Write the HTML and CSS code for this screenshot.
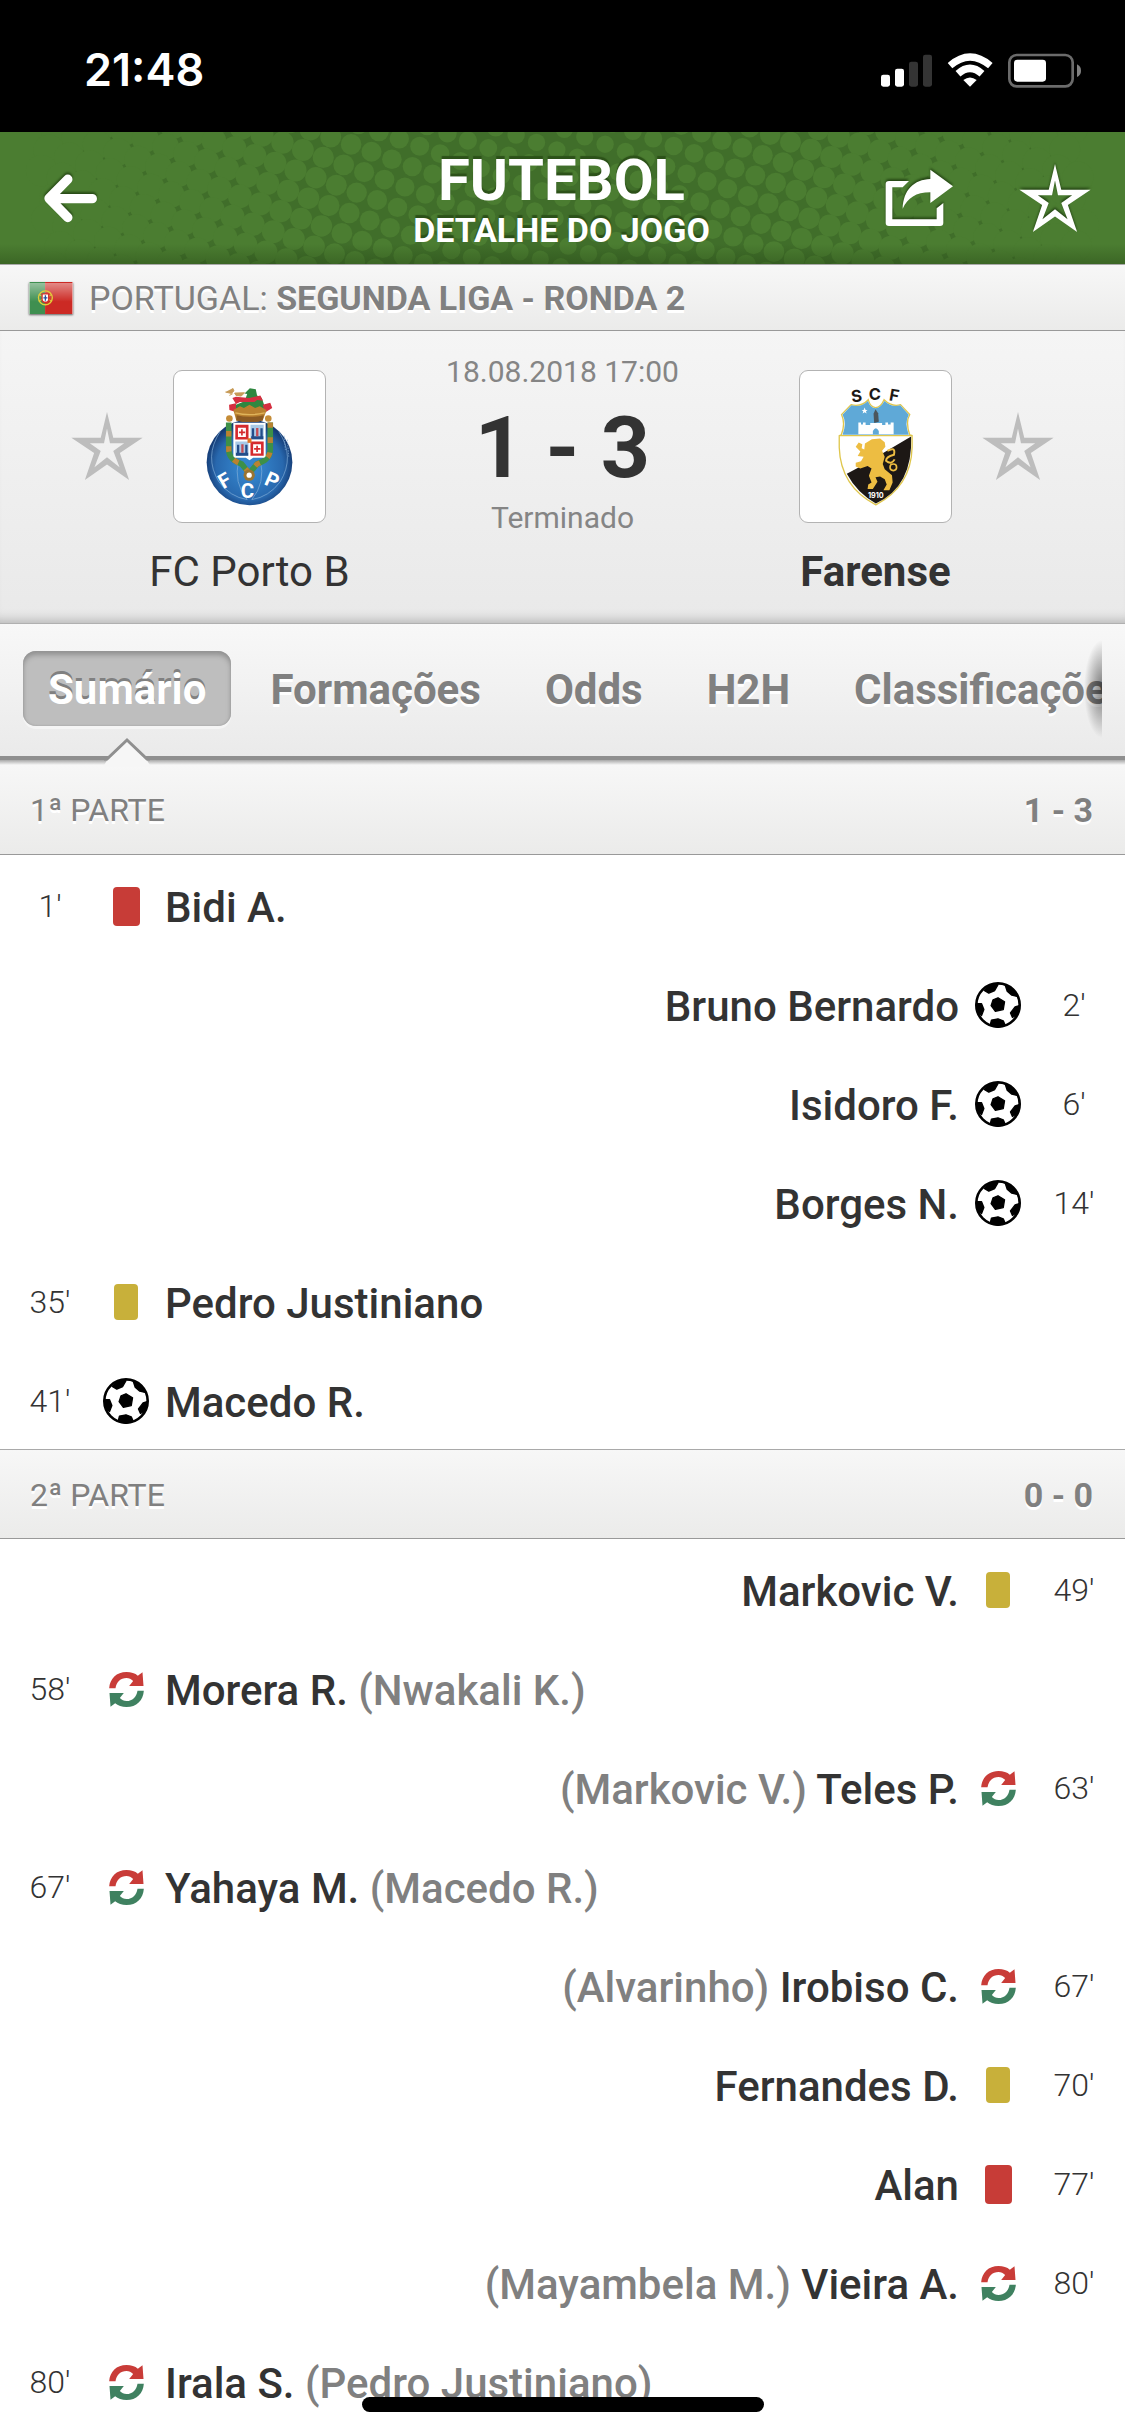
FILE: index.html
```html
<!DOCTYPE html>
<html lang="pt">
<head>
<meta charset="utf-8">
<meta name="viewport" content="width=device-width, initial-scale=1">
<title>Futebol - Detalhe do jogo</title>
<link rel="stylesheet" href="styles.css">
</head>
<body>
<svg class="defs" width="0" height="0" aria-hidden="true">
  <defs>
    <symbol id="star" viewBox="0 0 216 206">
      <path fill-rule="evenodd" d="M108 0 127 78H216L147 124 175 206 108 159 41 206 69 124 0 78H89ZM108 50 99 95H56L89 118 70 167 108 137 146 167 127 118 160 95H117Z"/>
    </symbol>
    <symbol id="ball" viewBox="0 0 140 140">
      <circle cx="70" cy="70" r="66" fill="#fff" stroke="#000" stroke-width="8"/>
      <path stroke="#000" stroke-width="4" stroke-linejoin="round" d="M70 48 90 60 86 84 62 89 49 72 55 54ZM28 26 48 8 70 8 60 26 42 34ZM92 10 116 22 128 44 112 40 98 28ZM4 66 20 66 27 84 20 102 8 92ZM134 72 122 76 108 94 114 108 130 98ZM50 116 70 112 86 118 92 132 70 138 46 132Z"/>
    </symbol>
    <symbol id="swap" viewBox="0 0 104 105">
      <path fill="#c93c38" d="M0 49C2 20 22 0 52 0 66 0 78 4 86 11L100 1 103 42H60L72 27C66 21 60 18 52 18 34 18 22 30 19 49Z"/>
      <path fill="#3f8160" d="M104 56C102 85 82 105 52 105 38 105 26 101 18 94L4 104 1 63H44L32 78C38 84 44 87 52 87 70 87 82 75 85 56Z"/>
    </symbol>
  </defs>
</svg>

<div class="status-bar">
  <time class="clock">21:48</time>
  <svg class="status-icons" viewBox="240 88 609 111" aria-hidden="true">
    <g fill="#fff"><rect x="243" y="159" width="27" height="36" rx="7"/><rect x="285" y="141" width="27" height="54" rx="7"/></g>
    <g fill="#343434"><rect x="327" y="120" width="27" height="75" rx="7"/><rect x="369" y="99" width="27" height="96" rx="7"/></g>
    <path d="M510 195 490 175Q510 160 530 175Z" fill="#fff"/>
    <path d="M474 156Q510 124 546 156" fill="none" stroke="#fff" stroke-width="22"/>
    <path d="M450 132Q510 80 571 132" fill="none" stroke="#fff" stroke-width="21"/>
    <rect x="628" y="100" width="190" height="94" rx="22" fill="none" stroke="#6b6b6b" stroke-width="8"/>
    <rect x="642" y="114" width="96" height="66" rx="10" fill="#fff"/>
    <path d="M831 128Q843 134 843 147T831 166Z" fill="#808080"/>
  </svg>
</div>

<header class="app-header">
  <svg class="halftone" aria-hidden="true"></svg>
  <button class="icon-button back" type="button" aria-label="Voltar">
    <svg width="57" height="54" viewBox="125 155 170 160"><path d="M202 179 146 236 202 293M150 237H275" fill="none" stroke="#fff" stroke-width="28" stroke-linecap="round" stroke-linejoin="round"/></svg>
  </button>
  <div class="titles">
    <h1>FUTEBOL</h1>
    <p>DETALHE DO JOGO</p>
  </div>
  <div class="actions">
    <button class="icon-button" type="button" aria-label="Partilhar">
      <svg width="70" height="60" viewBox="250 445 210 180" fill="#fff"><path d="M325 484 306 503H275V599H408V566L428 550V609Q428 619 418 619H265Q255 619 255 609V493Q255 484 265 484Z"/><path d="M389 450 457 500 389 550V518C345 518 322 535 306 567 308 510 340 480 389 478Z"/></svg>
    </button>
    <button class="icon-button" type="button" aria-label="Favorito">
      <svg width="72" height="68" fill="#fff"><use href="#star"/></svg>
    </button>
  </div>
</header>

<div class="league">
  <svg class="flag" viewBox="0 0 130 97" aria-hidden="true">
    <defs><linearGradient id="gloss" x2="0" y2="1"><stop stop-color="#fff" stop-opacity=".45"/><stop offset="1" stop-color="#fff" stop-opacity="0"/></linearGradient></defs>
    <path fill="#3f8f50" d="M0 0H47V97H0Z"/><path fill="#cc2a24" d="M47 0H130V97H47Z"/>
    <path fill="url(#gloss)" d="M0 3H130V60H0Z"/>
    <circle cx="48" cy="48" r="21" fill="none" stroke="#e0cf3a" stroke-width="4"/>
    <path d="M28 38 68 58M28 58 68 38" stroke="#e0cf3a" stroke-width="3"/>
    <path d="M36 34H60V52Q60 64 48 64T36 52Z" fill="#d3302b"/><path d="M40 38H56V52Q56 59 48 59T40 52Z" fill="#fff"/>
    <path d="M48 40V57M42 48H54" stroke="#27519b" stroke-width="4"/>
  </svg>
  <h2>PORTUGAL: <b>SEGUNDA LIGA - RONDA 2</b></h2>
</div>

<main>
<section class="match">
  <button class="icon-button fav-home" type="button" aria-label="Seguir FC Porto B"><svg width="72" height="68"><use href="#star"/></svg></button>
  <div class="crest">
    <svg viewBox="40 30 458 458" aria-hidden="true">
      <defs><radialGradient id="blue" cx=".5" cy=".55" r=".52"><stop offset=".2" stop-color="#3484cb"/><stop offset=".75" stop-color="#2868ae"/><stop offset="1" stop-color="#143a73"/></radialGradient></defs>
      <circle cx="269" cy="307" r="130" fill="url(#blue)"/>
      <g fill="none" stroke="#85b1da" stroke-width="2"><path d="M180 214Q130 290 176 366 210 412 262 420M358 214Q408 290 362 366 328 412 276 420M236 300Q220 370 262 420M302 300Q318 370 276 420"/><path d="M384 238 388 290M374 226 378 270" stroke-dasharray="5 3"/></g>
      <path d="M206 186V270Q208 300 245 312L268 340 292 312Q330 300 332 270V186" fill="none" stroke="#3d9048" stroke-width="17"/>
      <path d="M206 186V270Q208 300 245 312L268 340 292 312Q330 300 332 270V186" fill="none" stroke="#b98231" stroke-width="16" stroke-dasharray="17 29" stroke-dashoffset="20"/>
      <circle cx="268" cy="346" r="17" fill="#9b7431"/><circle cx="268" cy="346" r="8" fill="#fff"/>
      <g fill="#c58c37"><circle cx="208" cy="174" r="10"/><circle cx="326" cy="174" r="10"/></g>
      <path d="M220 187H318V286Q318 293 308 293H280L269 301 258 293H230Q220 293 220 286Z" fill="#fff"/>
      <g fill="#d52a2e"><path d="M226 193H266V238H226ZM272 244H312V287H272Z"/></g>
      <g fill="#a9c9e6"><path d="M272 193H312V238H272ZM226 244H266V287H226Z"/></g>
      <g fill="#fff"><path d="M234 202H258V230H234ZM280 252H304V280H280Z"/></g>
      <path d="M246 207V226M237 216H256M292 257V276M283 266H302" stroke="#d52a2e" stroke-width="5"/>
      <path d="M274 228H311V237H274ZM228 278H265V287H228ZM276 204H283V228H276ZM302 204H309V228H302ZM231 254H238V278H231ZM256 254H263V278H256Z" fill="#234d8a"/>
      <path d="M289 203H296V228H289ZM244 252H251V278H244Z" fill="#c24b54"/>
      <path d="M263 234H275V248H263Z" fill="#e27424"/>
      <path d="M220 145 228 132 254 122 262 100 254 98 270 82 288 85 292 104 306 112 318 145Z" fill="#2f8740"/>
      <path d="M217 112 228 108 268 112 302 104 310 120 292 118 284 124H240L228 130ZM207 132 228 128V154L208 148ZM309 132 332 126 338 142 316 156Z" fill="#d52f40"/>
      <path d="M196 94 214 98 222 90 218 82M224 97 254 96 244 106 228 104ZM208 104 218 99" fill="#c79b57" stroke="#c79b57" stroke-width="3"/>
      <path d="M220 148 240 137 252 142 269 132 286 142 300 137 321 148 309 180Q269 190 229 180Z" fill="#b9802f"/>
      <path d="M230 164Q269 174 312 164L309 180Q269 190 229 180Z" fill="#8b5a23"/>
      <path d="M226 157Q269 168 315 157" fill="none" stroke="#e0b45b" stroke-width="4"/>
      <g fill="#fff" font-family="Roboto, sans-serif" font-weight="700" font-size="62" text-anchor="middle"><text transform="translate(204 381) rotate(-30)">F</text><text x="263" y="415">C</text><text transform="translate(329 381) rotate(24)">P</text></g>
    </svg>
  </div>
  <div class="result">
    <time>18.08.2018 17:00</time>
    <strong>1 - 3</strong>
    <span>Terminado</span>
  </div>
  <div class="crest">
    <svg viewBox="27 30 458 458" aria-hidden="true">
      <path d="M182 132Q212 140 234 117 240 140 256 141 272 140 282 117 306 140 332 132L360 162Q346 185 360 224L367 226V262Q364 380 257 436 150 380 146 262V226L152 224Q166 190 153 162Z" fill="#fff" stroke="#dfc64c" stroke-width="4"/>
      <path d="M183 134Q212 142 233 121 240 142 256 143 272 142 283 121 306 142 331 134L357 163Q343 188 357 223H156Q170 188 156 163Z" fill="#5fa9d7"/>
      <path d="M364 229Q370 380 257 432 200 400 169 342L206 322Z" fill="#1d1815"/>
      <path d="M148 226H366" stroke="#dfc64c" stroke-width="4"/>
      <path d="M204 222V186H212V192H218V186H226V194H240V188H276V194H286V186H294V192H302V186H311V222H266V212Q257 196 248 212V222Z" fill="#fff"/>
      <path d="M223 141 226 148H232L227 152 229 159 223 155 217 159 219 152 214 148H220Z" fill="#fff"/>
      <path d="M256 146 264 158 266 184 252 188 250 160Z" fill="#4b565c"/>
      <path d="M196 260 205 247 216 252 214 264 222 268 224 250 245 237 270 235 284 246 286 260 276 272 284 290 278 312 284 328 306 346 308 368 298 392 280 392 290 374 284 358 270 350 256 352 262 366 248 388 232 388 234 374 244 368 236 348 244 326 232 318 210 326 196 320 196 308 212 304 220 290 202 288 210 274Z" fill="#edbd42"/>
      <path d="M292 272Q318 258 312 284 288 290 288 302 304 316 314 298" fill="none" stroke="#edbd42" stroke-width="6"/>
      <circle cx="310" cy="322" r="10" fill="none" stroke="#edbd42" stroke-width="5"/>
      <g font-family="Inter, sans-serif" font-weight="700" text-anchor="middle"><g font-size="50" fill="#1d1815"><text transform="translate(201 123) rotate(-8)">S</text><text x="254" y="117">C</text><text transform="translate(310 121) rotate(10)">F</text></g><text x="257" y="416" font-size="22" fill="#fff">1910</text></g>
    </svg>
  </div>
  <button class="icon-button fav-away" type="button" aria-label="Seguir Farense"><svg width="72" height="68"><use href="#star"/></svg></button>
  <p class="team home">FC Porto B</p>
  <p class="team away winner">Farense</p>
</section>

<nav class="tabs">
  <div class="tab-list">
    <button class="tab active" type="button">Sumário
      <svg class="pointer" width="48" height="30" viewBox="0 0 48 30" aria-hidden="true"><path d="M0 30 6 20 24 1 42 20 48 30Z" fill="#f6f6f6"/><path d="M1 22H4L24 3 44 22H47" fill="none" stroke="#8f8f8f" stroke-width="3"/></svg>
    </button>
    <button class="tab" type="button">Formações</button>
    <button class="tab" type="button">Odds</button>
    <button class="tab" type="button">H2H</button>
    <button class="tab" type="button">Classificações</button>
    <span class="more-shade"></span>
  </div>
</nav>

<section>
  <header class="period first"><h3>1ª PARTE</h3><b>1 - 3</b></header>
  <ul class="events">
    <li><time>1'</time><i class="icon"><span class="card red"></span></i><p>Bidi A.</p></li>
    <li class="away"><time>2'</time><i class="icon"><svg width="46" height="46"><use href="#ball"/></svg></i><p>Bruno Bernardo</p></li>
    <li class="away"><time>6'</time><i class="icon"><svg width="46" height="46"><use href="#ball"/></svg></i><p>Isidoro F.</p></li>
    <li class="away"><time>14'</time><i class="icon"><svg width="46" height="46"><use href="#ball"/></svg></i><p>Borges N.</p></li>
    <li><time>35'</time><i class="icon"><span class="card yellow"></span></i><p>Pedro Justiniano</p></li>
    <li><time>41'</time><i class="icon"><svg width="46" height="46"><use href="#ball"/></svg></i><p>Macedo R.</p></li>
  </ul>
</section>

<section>
  <header class="period"><h3>2ª PARTE</h3><b>0 - 0</b></header>
  <ul class="events">
    <li class="away"><time>49'</time><i class="icon"><span class="card yellow"></span></i><p>Markovic V.</p></li>
    <li><time>58'</time><i class="icon"><svg width="35" height="35"><use href="#swap"/></svg></i><p>Morera R. <small>(Nwakali K.)</small></p></li>
    <li class="away"><time>63'</time><i class="icon"><svg width="35" height="35"><use href="#swap"/></svg></i><p><small>(Markovic V.)</small> Teles P.</p></li>
    <li><time>67'</time><i class="icon"><svg width="35" height="35"><use href="#swap"/></svg></i><p>Yahaya M. <small>(Macedo R.)</small></p></li>
    <li class="away"><time>67'</time><i class="icon"><svg width="35" height="35"><use href="#swap"/></svg></i><p><small>(Alvarinho)</small> Irobiso C.</p></li>
    <li class="away"><time>70'</time><i class="icon"><span class="card yellow"></span></i><p>Fernandes D.</p></li>
    <li class="away"><time>77'</time><i class="icon"><span class="card red"></span></i><p>Alan</p></li>
    <li class="away"><time>80'</time><i class="icon"><svg width="35" height="35"><use href="#swap"/></svg></i><p><small>(Mayambela M.)</small> Vieira A.</p></li>
    <li><time>80'</time><i class="icon"><svg width="35" height="35"><use href="#swap"/></svg></i><p>Irala S. <small>(Pedro Justiniano)</small></p></li>
  </ul>
</section>
</main>
<div class="home-indicator"></div>
<script src="halftone.js"></script>
</body>
</html>
```
FILE: styles.css
```css
* { box-sizing: border-box; }
body, h1, h2, h3, p, ul { margin: 0; padding: 0; }
body {
  min-height: 100vh;
  background: #fff;
  color: #333;
  font-family: Roboto, "Liberation Sans", sans-serif;
  font-size: 42px;
}
button { font: inherit; border: 0; background: none; padding: 0; color: inherit; }
svg { display: block; }
.defs { position: absolute; }

.status-bar {
  height: 132px;
  padding: 6px 42px 0 84px;
  display: flex;
  align-items: center;
  justify-content: space-between;
  background: #000;
  color: #fff;
}
.clock { font-family: Inter, sans-serif; font-size: 45px; font-weight: 600; }
.status-icons { width: 203px; height: 37px; }

.app-header {
  position: relative;
  height: 132px;
  padding: 0 34px 0 42px;
  display: grid;
  grid-template-columns: 1fr auto 1fr;
  align-items: center;
  background: #4b7d31;
  color: #fff;
}
.halftone { position: absolute; inset: 0; width: 100%; height: 100%; }
.app-header::after {
  content: "";
  position: absolute;
  inset: auto 0 0;
  height: 20px;
  background: linear-gradient(transparent, rgba(30, 60, 15, .35));
}
.app-header > :not(.halftone) { position: relative; }
.app-header::after { position: absolute; }
.app-header .icon-button svg { filter: drop-shadow(0 -2px 1px rgba(30, 60, 15, .8)); }
.back { justify-self: start; }
.titles { text-align: center; padding: 6px 10px 0 0; text-shadow: 0 -3px 1px #2c5119; }
.titles h1 { font-size: 58px; line-height: 58px; font-weight: 700; }
.titles p { font-size: 34px; line-height: 42px; font-weight: 700; }
.actions { display: flex; align-items: center; justify-content: flex-end; gap: 65px; }

.league {
  height: 67px;
  padding: 0 29px;
  display: flex;
  align-items: center;
  gap: 16px;
  border-top: 1px solid #a9a9a9;
  border-bottom: 1px solid #999;
  background: linear-gradient(#f7f7f7, #ebebea);
  color: #808080;
  text-shadow: 0 3px 0 #fff;
}
.league h2 { font-size: 34px; font-weight: 400; }
.league b { font-weight: 700; }
.flag { width: 44px; height: 32px; box-shadow: 0 1px 2px rgba(0, 0, 0, .6); }

.match {
  padding: 20px 71px 22px;
  display: grid;
  grid-template-columns: 72px 153px 1fr 153px 72px;
  grid-template-rows: 190px auto;
  column-gap: 30px;
  align-items: center;
  background: linear-gradient(#f5f5f5, #e9e9e9);
  border-bottom: 1px solid #b0b0b0;
  box-shadow: inset 0 -12px 12px -10px rgba(0, 0, 0, .25);
}
.match .icon-button { fill: #bdbdbd; }
.crest { height: 153px; border: 1px solid #b3b3b3; border-radius: 9px; background: #fff; }
.result { align-self: start; display: flex; flex-direction: column; align-items: center; color: #858585; }
.result time, .result span { font-size: 30px; line-height: 42px; }
.result strong { font-size: 86px; line-height: 110px; color: #333; }
.result span { line-height: 30px; }
.team { grid-row: 2; justify-self: center; padding-top: 2px; line-height: 58px; white-space: nowrap; }
.team.home { grid-column: 2; }
.team.away { grid-column: 4; }
.winner { font-weight: 700; }

.tabs {
  position: relative;
  z-index: 1;
  padding: 0 23px;
  border-bottom: 4px solid #8f8f8f;
  background: linear-gradient(#f8f8f8, #eaeaea);
}
.tab-list {
  position: relative;
  display: flex;
  gap: 14px;
  padding: 27px 0 30px;
  overflow-x: clip;
}
.tab {
  position: relative;
  flex: none;
  padding: 3px 25px 0;
  line-height: 72px;
  border-radius: 13px;
  font-weight: 700;
  color: #808080;
  text-shadow: 0 3px 0 #fff;
}
.tab.active {
  background: #bebebe;
  color: #fff;
  text-shadow: 0 -3px 0 #808080;
  box-shadow: inset 0 4px 5px #929292, inset 0 0 2px #999, 0 3px 0 #f5f5f5;
}
.pointer { position: absolute; top: 86px; left: calc(50% - 24px); }
.more-shade {
  position: absolute;
  top: 16px;
  right: 0;
  width: 18px;
  height: 98px;
  background: radial-gradient(18px 49px at 100% 50%, rgba(0, 0, 0, .5), rgba(0, 0, 0, 0));
}

.period {
  height: 90px;
  padding: 2px 32px 0 30px;
  display: flex;
  align-items: center;
  justify-content: space-between;
  border-top: 1px solid #a9a9a9;
  border-bottom: 1px solid #999;
  background: linear-gradient(#f7f7f7, #ebebea);
  color: #808080;
  font-size: 34px;
  text-shadow: 0 3px 0 #fff;
}
.period.first {
  height: 95px;
  padding-top: 6px;
  border-top: 0;
  background: linear-gradient(#a8a8a8, #f7f7f7 5px, #ebebea);
}
.period h3 { font-size: 32px; font-weight: 400; }

.events { list-style: none; }
.events li { height: 99px; padding: 3px 1px 0 0; display: flex; align-items: center; }
.events .away { flex-direction: row-reverse; }
.events time { width: 100px; text-align: center; font-size: 32px; font-weight: 300; color: #333; }
.icon { width: 52px; display: flex; justify-content: center; }
.events p { padding: 2px 13px 0; font-weight: 500; }
.events small { font-size: 42px; color: #808080; }
.card { border-radius: 4px; }
.red { width: 27px; height: 39px; background: #c73c37; }
.yellow { width: 24px; height: 36px; background: #c8b03a; }

.home-indicator {
  position: fixed;
  left: 0;
  right: 0;
  bottom: 24px;
  width: 402px;
  height: 15px;
  margin: 0 auto;
  border-radius: 8px;
  background: #000;
}
```
FILE: halftone.js
```js
// Halftone texture of the header: dots on a rotated grid that grow and merge towards both edges.
const svg = document.querySelector('.halftone');
const w = svg.clientWidth, h = svg.clientHeight;
const ux = 20.4, uy = 7.4;
const mid = w / 2;
let dots = `<rect x="70" width="${w - 140}" height="${h}" fill="#406e2a"/><g fill="#4b7d31">`;
for (let i = -60; i < 60; i++) {
  for (let j = -60; j < 60; j++) {
    const x = mid + i * ux - j * uy, y = h / 2 + i * uy + j * ux;
    if (x < 40 || x > w - 40 || y < -20 || y > h + 20) continue;
    const d = Math.abs(x - mid) / mid;
    const r = Math.min(15.6, 8.6 + 8 * Math.pow(d, 1.6));
    dots += `<circle cx="${x.toFixed(1)}" cy="${y.toFixed(1)}" r="${r.toFixed(1)}"/>`;
  }
}
svg.innerHTML = dots + '</g>';
```
